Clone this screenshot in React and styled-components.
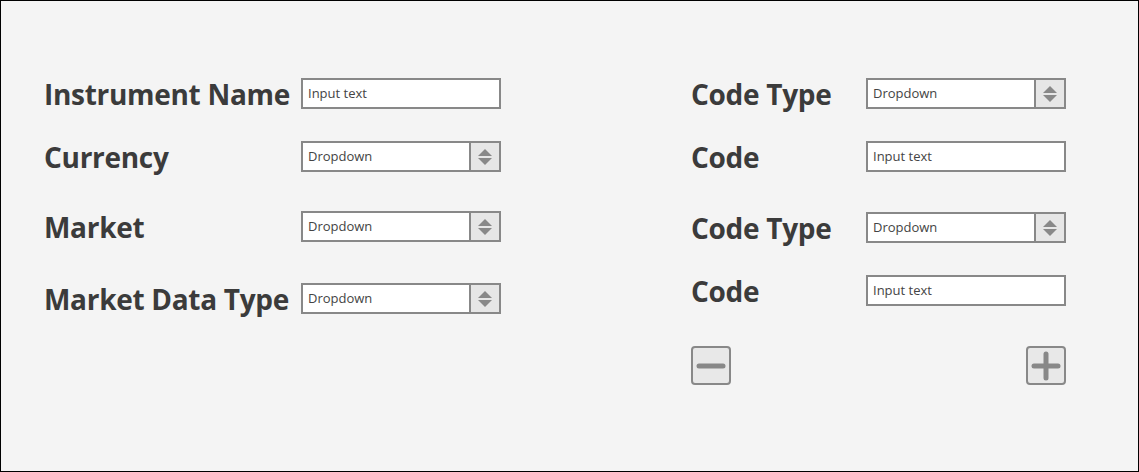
import React from "react";
import styled, { createGlobalStyle } from "styled-components";

const GlobalStyle = createGlobalStyle`
  html, body {
    margin: 0;
    padding: 0;
    background: #f4f4f4;
  }
  * {
    box-sizing: border-box;
  }
`;

const Frame = styled.div`
  width: 1139px;
  height: 472px;
  border: 1px solid #000;
  background: #f4f4f4;
  display: flex;
  padding: 77px 0 0 43px;
  font-family: "Open Sans", "Liberation Sans", sans-serif;
  color: #3b3b3b;
`;

const Column = styled.div`
  display: flex;
  flex-direction: column;
  width: ${(p) => p.$width}px;
  margin-left: ${(p) => p.$offset || 0}px;
`;

const Row = styled.div`
  display: flex;
  align-items: center;
  height: 31px;
  margin-top: ${(p) => p.$gap || 0}px;
`;

const Label = styled.div`
  width: ${(p) => p.$width}px;
  font-size: 28px;
  font-weight: 700;
  letter-spacing: -0.3px;
  white-space: nowrap;
  line-height: 31px;
  margin-top: ${(p) => p.$shift || 0}px;
`;

const Field = styled.div`
  width: 200px;
  height: 31px;
  border: 2px solid #888;
  background: #fff;
  display: flex;
  align-items: center;
`;

const FieldText = styled.span`
  flex: 1;
  padding-left: 5px;
  margin-top: -1px;
  font-size: 13px;
  color: #444;
  font-family: "Open Sans", "Liberation Sans", sans-serif;
`;

const Spinner = styled.div`
  width: 30px;
  height: 100%;
  border-left: 2px solid #888;
  background: #e6e6e6;
  display: flex;
  align-items: center;
  justify-content: center;
`;

const ButtonRow = styled.div`
  display: flex;
  justify-content: space-between;
  margin-top: 40px;
`;

const IconButton = styled.div`
  width: 40px;
  height: 39px;
  border: 2px solid #888;
  border-radius: 4px;
  background: #e8e8e8;
  display: flex;
  align-items: center;
  justify-content: center;
`;

const Arrows = () => (
  <svg width="16" height="18" viewBox="0 0 16 18">
    <polygon points="8,1 15,8 1,8" fill="#888" />
    <polygon points="1,10 15,10 8,17" fill="#888" />
  </svg>
);

const Minus = () => (
  <svg width="30" height="30" viewBox="0 0 30 30">
    <line x1="3" y1="15" x2="27" y2="15" stroke="#888" strokeWidth="5" strokeLinecap="round" />
  </svg>
);

const Plus = () => (
  <svg width="32" height="32" viewBox="0 0 32 32">
    <line x1="4" y1="16" x2="28" y2="16" stroke="#888" strokeWidth="5" strokeLinecap="round" />
    <line x1="16" y1="4" x2="16" y2="28" stroke="#888" strokeWidth="5" strokeLinecap="round" />
  </svg>
);

const Input = ({ text }) => (
  <Field>
    <FieldText>{text}</FieldText>
  </Field>
);

const Dropdown = ({ text }) => (
  <Field>
    <FieldText>{text}</FieldText>
    <Spinner>
      <Arrows />
    </Spinner>
  </Field>
);

const leftRows = [
  { label: "Instrument Name", kind: "input", gap: 0, shift: 1 },
  { label: "Currency", kind: "dropdown", gap: 32, shift: 1 },
  { label: "Market", kind: "dropdown", gap: 39, shift: 1 },
  { label: "Market Data Type", kind: "dropdown", gap: 41, shift: 2 },
];

const rightRows = [
  { label: "Code Type", kind: "dropdown", gap: 0, shift: 1 },
  { label: "Code", kind: "input", gap: 32, shift: 1 },
  { label: "Code Type", kind: "dropdown", gap: 40, shift: 2 },
  { label: "Code", kind: "input", gap: 32, shift: 2 },
];

const FormRow = ({ row, labelWidth }) => (
  <Row $gap={row.gap}>
    <Label $width={labelWidth} $shift={row.shift}>
      {row.label}
    </Label>
    {row.kind === "input" ? <Input text="Input text" /> : <Dropdown text="Dropdown" />}
  </Row>
);

export default function App() {
  return (
    <>
      <GlobalStyle />
      <Frame>
        <Column $width={457}>
          {leftRows.map((r, i) => (
            <FormRow key={i} row={r} labelWidth={257} />
          ))}
        </Column>
        <Column $width={375} $offset={190}>
          {rightRows.map((r, i) => (
            <FormRow key={i} row={r} labelWidth={175} />
          ))}
          <ButtonRow>
            <IconButton>
              <Minus />
            </IconButton>
            <IconButton>
              <Plus />
            </IconButton>
          </ButtonRow>
        </Column>
      </Frame>
    </>
  );
}
